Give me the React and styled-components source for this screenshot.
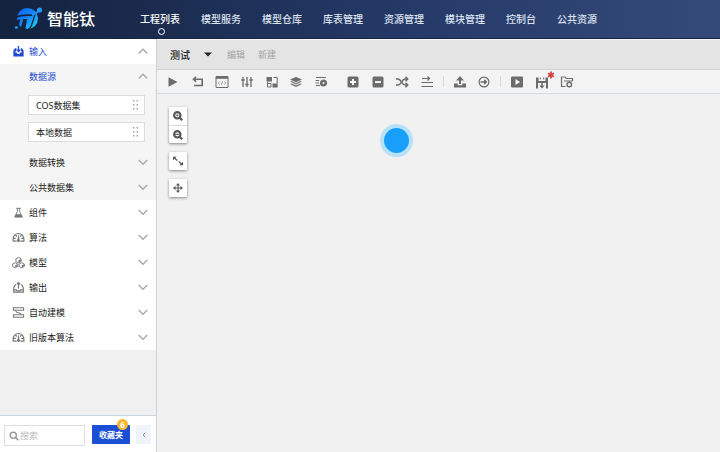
import React from "react";
import styled, { createGlobalStyle } from "styled-components";

const GlobalStyle = createGlobalStyle`
  * { box-sizing: border-box; }
  body {
    margin: 0;
    font-family: "Noto Sans", "Noto Sans CJK SC", sans-serif;
    font-size: 9px;
    color: #222;
    background: #f0f0f0;
  }
  button, input { font: inherit; color: inherit; }
  button { border: 0; padding: 0; background: none; cursor: pointer; }
  svg { display: block; flex: none; }
`;

const Page = styled.div`
  display: flex;
  flex-direction: column;
  min-height: 100vh;
`;

const Header = styled.header`
  display: flex;
  align-items: center;
  height: 39px;
  background: linear-gradient(90deg, #12233f 0%, #1c2d52 25%, #263b6a 60%, #344a78 100%);
  border-bottom: 1px solid #182440;
`;

const Brand = styled.a`
  display: flex;
  align-items: center;
  gap: 3px;
  width: 140px;
  padding-left: 14px;
  color: #fff;
  font-size: 16px;
  line-height: 20px;
  font-weight: 500;
  text-decoration: none;
`;

const Nav = styled.nav`
  display: flex;
  gap: 21px;
`;

const NavLink = styled.a`
  position: relative;
  color: ${(p) => (p.$active ? "#fff" : "#dde3f0")};
  font-size: 10px;
  line-height: 16px;
  font-weight: 500;
  white-space: nowrap;
  text-decoration: none;
  &::after {
    content: "";
    display: ${(p) => (p.$active ? "block" : "none")};
    position: absolute;
    left: 50%;
    top: 17px;
    width: 5px;
    height: 5px;
    margin-left: -2px;
    border: 1px solid #fff;
    border-radius: 50%;
  }
`;

const Body = styled.div`
  display: flex;
  flex: 1;
`;

const Sidebar = styled.aside`
  display: flex;
  flex-direction: column;
  flex: none;
  width: 157px;
  border-right: 1px solid #c9d3df;
`;

const Menu = styled.div`
  flex: 1;
`;

const MenuRow = styled.button`
  display: flex;
  align-items: center;
  width: 100%;
  height: 25px;
  padding: 0 8px 0 12px;
  background: #fff;
  color: ${(p) => (p.$active ? "#1d49cf" : "#222")};
  text-align: left;
`;

const SubRow = styled(MenuRow)`
  padding-left: 29px;
  background: transparent;
`;

const IconSlot = styled.span`
  width: 17px;
  color: ${(p) => (p.$active ? "#1d49cf" : "#777")};
`;

const MenuText = styled.span`
  flex: 1;
  line-height: 14px;
`;

const SubMenu = styled.div`
  background: #f5f5f5;
`;

const DatasetList = styled.div`
  display: flex;
  flex-direction: column;
  gap: 7px;
  padding: 6px 11px 8px 28px;
`;

const Dataset = styled.div`
  display: flex;
  align-items: center;
  justify-content: space-between;
  height: 20px;
  padding: 0 6px 0 7px;
  border: 1px solid #dcdcdc;
  background: #fff;
  cursor: grab;
`;

const SideFooter = styled.div`
  display: flex;
  align-items: flex-start;
  height: 37px;
  padding: 9px 5px 0 4px;
  border-top: 1px solid #ccd4da;
  background: #fff;
`;

const Search = styled.label`
  display: flex;
  align-items: center;
  gap: 1px;
  width: 81px;
  height: 21px;
  padding: 0 4px;
  border: 1px solid #dedede;
  color: #999;
`;

const SearchInput = styled.input`
  flex: 1;
  min-width: 0;
  padding: 0;
  border: 0;
  outline: 0;
  background: none;
  &::placeholder { color: #bbb; opacity: 1; }
`;

const Favorites = styled.button`
  position: relative;
  width: 38px;
  height: 19px;
  margin: 0 6px 0 7px;
  border-radius: 1px;
  background: #1b50d5;
  color: #fff;
  font-size: 8px;
  font-weight: 700;
`;

const Badge = styled.span`
  position: absolute;
  right: 2px;
  top: -6px;
  width: 11px;
  height: 11px;
  border-radius: 50%;
  background: #f9b52c;
  font-size: 8px;
  line-height: 11px;
  text-align: center;
`;

const Collapse = styled.button`
  display: flex;
  align-items: center;
  justify-content: center;
  width: 15px;
  height: 19px;
  background: #eff3fb;
  color: #8093ab;
`;

const Main = styled.main`
  display: flex;
  flex-direction: column;
  flex: 1;
  min-width: 0;
  background: #f1f1f1;
`;

const ProjectBar = styled.div`
  display: flex;
  align-items: center;
  height: 31px;
  padding-left: 13px;
  background: #e4e4e4;
  border-top: 1px solid #f4f6f8;
  border-bottom: 1px solid #cfd3d6;
  line-height: 14px;
`;

const ProjectPicker = styled.button`
  display: flex;
  align-items: center;
  gap: 14px;
  margin-right: 15px;
  font-size: 10px;
  font-weight: 500;
`;

const BarAction = styled.button`
  margin-right: 13px;
  color: #a2a2a2;
`;

const Toolbar = styled.div`
  display: flex;
  align-items: center;
  height: 24px;
  padding-left: 4px;
  background: #f3f3f3;
  border-bottom: 1px solid #d3dce2;
  color: #6c6c6c;
`;

const ToolGroup = styled.div`
  display: grid;
  grid-template-columns: repeat(${(p) => p.$count}, 1fr);
  width: ${(p) => p.$width}px;
  margin-left: ${(p) => p.$gap}px;
`;

const Tool = styled.button`
  display: flex;
  align-items: center;
  justify-content: center;
  height: 22px;
`;

const Divider = styled.span`
  width: 1px;
  height: 11px;
  margin-left: 4px;
  background: #d6dade;
`;

const Canvas = styled.section`
  position: relative;
  flex: 1;
  padding: 13px 12px;
`;

const ZoomTools = styled.div`
  display: flex;
  flex-direction: column;
  gap: 9px;
  width: 18px;
`;

const ZoomPanel = styled.div`
  border-radius: 1px;
  background: #fff;
  box-shadow: 0 1px 3px rgba(0, 0, 0, 0.45);
`;

const ZoomButton = styled.button`
  display: flex;
  align-items: center;
  justify-content: center;
  width: 18px;
  height: 18px;
  color: #555;
  & + & { border-top: 1px solid #ddd; }
`;

const Node = styled.button`
  position: absolute;
  left: 223px;
  top: 30px;
  width: 33px;
  height: 33px;
  border: 4px solid #b7e1f9;
  border-radius: 50%;
  background: #179ffa;
`;

const Glyph = ({ size = 14, children }) => (
  <svg width={size} height={size} viewBox="0 0 14 14" fill="none" stroke="currentColor" strokeWidth="1.4" aria-hidden="true">
    {children}
  </svg>
);

const solid = { fill: "currentColor", stroke: "none" };

const Logo = () => (
  <svg width="30" height="26" viewBox="0 0 30 26" aria-hidden="true">
    <defs>
      <linearGradient id="brand" x1="0" y1="0" x2="1" y2="1">
        <stop offset="0" stopColor="#0a64f2" />
        <stop offset="0.5" stopColor="#1785fa" />
        <stop offset="1" stopColor="#19e0f4" />
      </linearGradient>
    </defs>
    <circle cx="13.500" cy="12.500" r="10.500" fill="url(#brand)" />
    <path d="M1 11.500Q8 8.500 18.500 9.300" fill="none" stroke="#14243f" strokeWidth="1.600" />
    <path d="M1 15.500Q3 13.500 6.500 13.200L4.500 20.500L7.200 23.500L1 24Z" fill="#14243f" />
    <path d="M9.300 13H13L11.300 23.500H6.500Z" fill="#14243f" />
    <path d="M21.300 7.500L17.500 19.500Q16.500 22 14.500 23" fill="none" stroke="#14243f" strokeWidth="1.300" />
    <path d="M18 8.500Q22 8.500 24.500 4.500" fill="none" stroke="#1c8dfb" strokeWidth="2" />
    <circle cx="25.500" cy="4" r="2.600" fill="#219cfb" />
    <circle cx="2.300" cy="21.500" r="1.500" fill="#139bf3" />
  </svg>
);

const Chevron = ({ up }) => (
  <svg width="10" height="8" viewBox="0 0 10 8" fill="none" stroke="#aaa" strokeWidth="1.4" aria-hidden="true">
    <path d={up ? "M.7 5.500L5 1.200L9.300 5.500" : "M.7 1L5 5.300L9.300 1"} />
  </svg>
);

const Grip = () => (
  <svg width="5" height="10" viewBox="0 0 5 10" fill="#aaa" aria-hidden="true">
    {[0, 4, 8].map((y) => (
      <React.Fragment key={y}>
        <rect x="0" y={y} width="1.500" height="1.500" />
        <rect x="3.500" y={y} width="1.500" height="1.500" />
      </React.Fragment>
    ))}
  </svg>
);

const menuIcons = {
  input: (
    <>
      <path {...solid} d="M1.500 6L3.300 3.500H4.800V5L3.300 8.200H5L6 9.700H8L9 8.200H10.700L9.500 5V3.500H10.700L12.500 6V12.500H1.500Z" />
      <path d="M7 1V6.500M5 5L7 7L9 5" strokeWidth="1.400" />
    </>
  ),
  output: (
    <>
      <path d="M4.500 4H3.500L1.800 7.500V12H12.200V7.500L10.500 4H9.500M2 9.500H4.800L5.500 10.500H8.500L9.200 9.500H12" strokeWidth="1.200" />
      <path d="M7 8V1.500M5.200 3.500L7 1.700L8.800 3.500" strokeWidth="1.300" />
    </>
  ),
  flask: (
    <>
      <path d="M4.500 2.500H9.500M5.800 2.500V6L2.800 11.800H11.200L8.200 6V2.500" strokeWidth="1" />
      <path {...solid} d="M4.500 9H9.500L11 12H3Z" />
    </>
  ),
  gauge: (
    <>
      <path d="M1.200 11V8.500A5.800 5.800 0 0 1 12.800 8.500V11H9M5 11H1.200M2 8H4M4 4.500L5.200 6M10 4.500L8.800 6M12 8H10" strokeWidth="1.300" />
      <path {...solid} d="M7 3L8 9A1.600 1.600 0 1 1 6 9Z" />
    </>
  ),
  cubes: (
    <>
      <path d="M7 1.500L9.800 3V6L7 7.500L4.200 6V3Z M3.500 7.200L6.300 8.600V11.200L3.500 12.700L.7 11.200V8.600Z M10.500 7.200L13.300 8.600V11.200L10.500 12.700L7.700 11.200V8.600Z" strokeWidth="1" />
      <path {...solid} d="M7 4.500L9.500 3.300V6L7 7.200Z M3.500 10L6 8.800V11L3.500 12.200Z M10.500 10L13 8.800V11L10.500 12.200Z" />
    </>
  ),
  model: <path d="M1.500 2H12.500V4.500H1.500Z M3.800 5Q4.300 7 7 7.200Q9.700 7.500 10.200 9.500M1.500 9.500H12.500V12H1.500Z" strokeWidth="1.100" />,
};

const MenuIcon = ({ name }) => <Glyph size={13}>{menuIcons[name]}</Glyph>;

const tools = [
  {
    width: 172, gap: 0, items: [
      ["运行", <path {...solid} d="M2.500 2.300L11.500 7L2.500 11.700Z" />],
      ["撤销", <path d="M5 1.800L2.500 4.200L5 6.600M2.500 4.200H11.200V10.500H3" strokeWidth="1.600" />],
      ["代码", <><path d="M1 1.500H13V12.500H1Z" strokeWidth="1" /><path d="M1 2.800H13" strokeWidth="2" /><path d="M4.800 6.500L3.200 8L4.800 9.500M9.200 6.500L10.800 8L9.200 9.500M7.600 6L6.400 10" strokeWidth=".6" /></>],
      ["参数", <path d="M3 2V12M7 2V12M11 2V12M1.300 5H4.700M5.300 9.500H8.700M9.300 5H12.700" strokeWidth="1.300" />],
      ["布局", <><path {...solid} d="M1.500 2H7V6.500H1.500Z M7.500 8.500H12.700V12.500H7.500Z" /><path d="M8.500 2.500H12.200V6.500M12.200 6V8.500M2.500 6.500V12H6V8.500H2.500" strokeWidth="1" /></>],
      ["图层", <><path {...solid} d="M7 2L13 4.500L7 7.200L1 4.500Z" /><path {...solid} d="M1 6.500L2.500 6L7 8.200L11.500 6L13 6.500L7 9.500Z M1 9L2.500 8.400L7 10.600L11.500 8.400L13 9L7 12Z" /></>],
      ["任务", <><path d="M2 2.500H12M1.500 5.500H5.200M1.500 8H5M2 10.500H6" strokeWidth="1" /><circle cx="9.500" cy="8" r="2.300" strokeWidth="2.600" /></>],
    ],
  },
  {
    width: 98, gap: 8, items: [
      ["放大", <><rect {...solid} x="1.500" y="1.500" width="11" height="11" rx="1.500" /><path d="M7 4V10M4 7H10" stroke="#fff" strokeWidth="1.800" /></>],
      ["缩小", <><rect {...solid} x="1.500" y="1.500" width="11" height="11" rx="1.500" /><path d="M4 7H10" stroke="#fff" strokeWidth="1.800" /></>],
      ["随机", <path d="M1 4H3.200C6 4 7 10 10 10H12.500M1 10H3.200C6 10 7 4 10 4H12.500M10.500 1.800L12.700 4L10.500 6.200M10.500 7.800L12.700 10L10.500 12.200" strokeWidth="1.500" />],
      ["对齐", <path d="M2 3.500H9.500M7.500 1.500L9.500 3.500L7.500 5.500M1.500 7.500H13M1.500 11.500H13" strokeWidth="1.200" />],
    ],
  },
  {
    width: 48, gap: 4, divider: true, items: [
      ["上传", <path {...solid} d="M7 1L11 5.500H8V9H6V5.500H3Z M1 8.500H4.800V10.300H9.200V8.500H13V12.500H1Z" />],
      ["导出", <><circle cx="7" cy="7" r="4.900" strokeWidth="1.200" /><path d="M3.500 7H9M7.200 4.900L9.300 7L7.200 9.100" strokeWidth="1.500" /></>],
    ],
  },
  {
    width: 74, gap: 4, divider: true, items: [
      ["播放", <><rect {...solid} x="1" y="1.500" width="12" height="11" rx="1" /><path d="M5.500 4L10 7L5.500 10Z" fill="#fff" stroke="none" /></>],
      ["保存", <><path {...solid} d="M1 2.500H3.500V6H10.500V2.500H13V13.500H11V8H3V13.500H1Z" /><path d="M5.300 2.500V4.500M8.700 2.500V4.500" strokeWidth="1" /><path {...solid} d="M6.200 7.500H7.800V10.500H9.800L7 13.500L4.200 10.500H6.200Z" /></>, true],
      ["目录设置", <><path d="M5.500 11.500H1.500V2H5L6.200 3.500H12.500V6" strokeWidth="1.200" /><path d="M4 6H12.500" strokeWidth="1" /><circle cx="9.300" cy="9.500" r="2.200" strokeWidth="1.300" /><path d="M9.300 6.500V7.500M9.300 11.500V12.500M6.500 8L7.500 8.500M11.200 10.500L12.200 11M6.500 11L7.500 10.500M11.200 8.500L12.200 8" strokeWidth="1.200" /></>],
    ],
  },
];

const Unsaved = styled.span`
  position: absolute;
  right: -6px;
  top: -4px;
  color: #d6403f;
`;

const ToolFace = styled.span`
  position: relative;
`;

const menu = [
  ["flask", "组件"],
  ["gauge", "算法"],
  ["cubes", "模型"],
  ["output", "输出"],
  ["model", "自动建模"],
  ["gauge", "旧版本算法"],
];

const navItems = ["工程列表", "模型服务", "模型仓库", "库表管理", "资源管理", "模块管理", "控制台", "公共资源"];

export default function App() {
  return (
    <Page>
      <GlobalStyle />
      <Header>
        <Brand href="#"><Logo />智能钛</Brand>
        <Nav>
          {navItems.map((label, i) => (
            <NavLink key={label} href="#" $active={i === 0}>{label}</NavLink>
          ))}
        </Nav>
      </Header>
      <Body>
        <Sidebar>
          <Menu>
            <MenuRow $active aria-expanded="true">
              <IconSlot $active><MenuIcon name="input" /></IconSlot>
              <MenuText>输入</MenuText>
              <Chevron up />
            </MenuRow>
            <SubMenu>
              <SubRow $active aria-expanded="true"><MenuText>数据源</MenuText><Chevron up /></SubRow>
              <DatasetList>
                <Dataset>COS数据集<Grip /></Dataset>
                <Dataset>本地数据<Grip /></Dataset>
              </DatasetList>
              <SubRow><MenuText>数据转换</MenuText><Chevron /></SubRow>
              <SubRow><MenuText>公共数据集</MenuText><Chevron /></SubRow>
            </SubMenu>
            {menu.map(([icon, label]) => (
              <MenuRow key={label}>
                <IconSlot><MenuIcon name={icon} /></IconSlot>
                <MenuText>{label}</MenuText>
                <Chevron />
              </MenuRow>
            ))}
          </Menu>
          <SideFooter>
            <Search>
              <Glyph size={10}>
                <circle cx="6" cy="6" r="4.300" strokeWidth="2" />
                <path d="M9 9L13 13" strokeWidth="2.200" />
              </Glyph>
              <SearchInput type="search" placeholder="搜索" aria-label="搜索" />
            </Search>
            <Favorites>收藏夹<Badge>6</Badge></Favorites>
            <Collapse aria-label="收起">
              <svg width="4" height="6" viewBox="0 0 4 6" fill="none" stroke="currentColor" aria-hidden="true"><path d="M3.300 .6L1 3L3.300 5.400" /></svg>
            </Collapse>
          </SideFooter>
        </Sidebar>
        <Main>
          <ProjectBar>
            <ProjectPicker aria-haspopup="listbox">
              测试
              <svg width="8" height="5" viewBox="0 0 8 5" fill="#222" aria-hidden="true"><path d="M0 .5H8L4 4.500Z" /></svg>
            </ProjectPicker>
            <BarAction>编辑</BarAction>
            <BarAction>新建</BarAction>
          </ProjectBar>
          <Toolbar>
            {tools.map((group) => (
              <React.Fragment key={group.items[0][0]}>
                {group.divider && <Divider />}
                <ToolGroup $count={group.items.length} $width={group.width} $gap={group.gap}>
                  {group.items.map(([label, art, unsaved]) => (
                    <Tool key={label} aria-label={label}>
                      <ToolFace>
                        <Glyph>{art}</Glyph>
                        {unsaved && (
                          <Unsaved>
                            <Glyph size={8}><path d="M7 1V13M1.800 4L12.200 10M12.200 4L1.800 10" strokeWidth="3" /></Glyph>
                          </Unsaved>
                        )}
                      </ToolFace>
                    </Tool>
                  ))}
                </ToolGroup>
              </React.Fragment>
            ))}
          </Toolbar>
          <Canvas>
            <ZoomTools>
              <ZoomPanel>
                <ZoomButton aria-label="放大画布">
                  <Glyph size={10}><circle cx="6" cy="6" r="4.500" strokeWidth="3" /><path d="M9 9L13 13" strokeWidth="3" /><path d="M6 4V8M4 6H8" strokeWidth="1" /></Glyph>
                </ZoomButton>
                <ZoomButton aria-label="缩小画布">
                  <Glyph size={10}><circle cx="6" cy="6" r="4.500" strokeWidth="3" /><path d="M9 9L13 13" strokeWidth="3" /><path d="M3 6H9" strokeWidth="1.600" /></Glyph>
                </ZoomButton>
              </ZoomPanel>
              <ZoomPanel>
                <ZoomButton aria-label="适应画布">
                  <Glyph size={10}><path {...solid} d="M0 1H5L0 6Z M14 13H9L14 8Z" /><path d="M1.500 2.500L6 6.300M8 7.700L12.500 11.500" strokeWidth="1.600" /></Glyph>
                </ZoomButton>
              </ZoomPanel>
              <ZoomPanel>
                <ZoomButton aria-label="移动画布">
                  <Glyph size={10}><path d="M7 2V12M2 7H12" strokeWidth="1.500" /><path {...solid} d="M7 0L9.800 3.500H4.200Z M7 14L9.800 10.500H4.200Z M0 7L3.500 4.200V9.800Z M14 7L10.500 4.200V9.800Z" /></Glyph>
                </ZoomButton>
              </ZoomPanel>
            </ZoomTools>
            <Node aria-label="节点" />
          </Canvas>
        </Main>
      </Body>
    </Page>
  );
}
